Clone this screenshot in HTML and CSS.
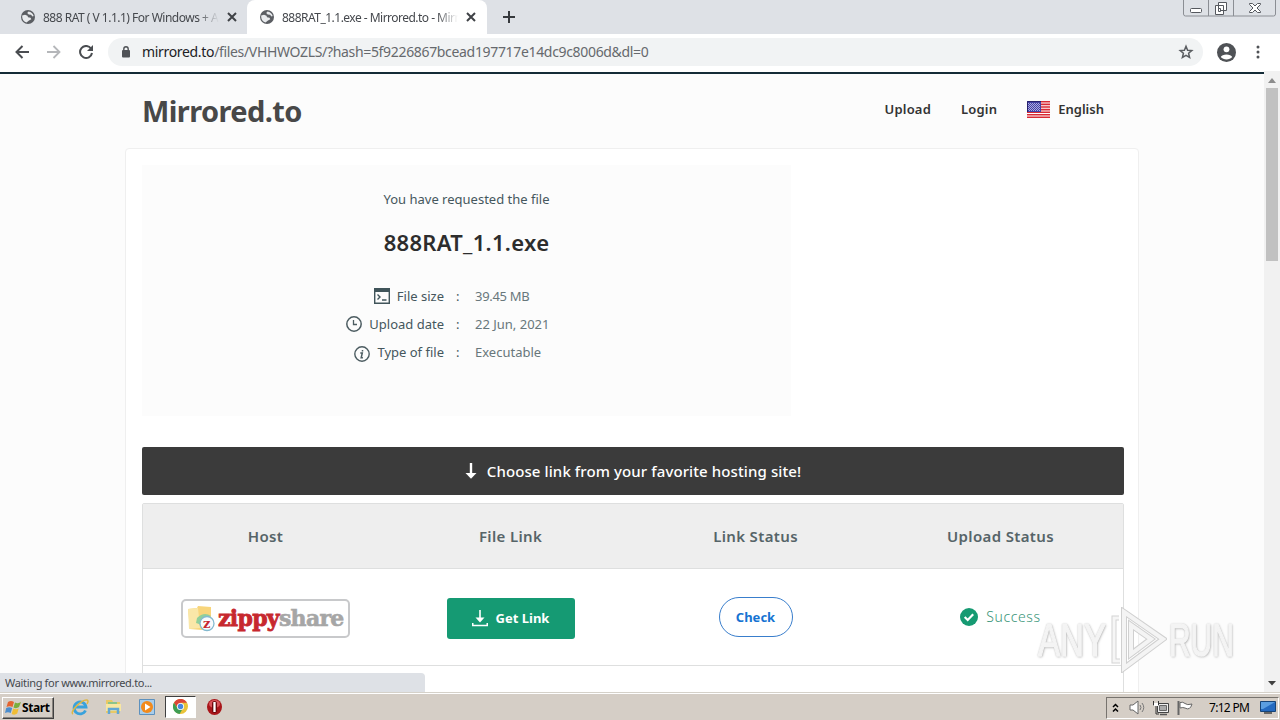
FILE: index.html
```html
<!DOCTYPE html>
<html lang="en">

<head>
	<meta charset="UTF-8">
	<title>888RAT_1.1.exe - Mirrored.to</title>
	<link rel="stylesheet" href="styles.css">
</head>

<body>
	<svg class="defs" width="0" height="0">
		<symbol id="globe" viewBox="0 0 14 14">
			<circle cx="7" cy="7" r="7" fill="#5b5e63"/>
			<path d="M1.200 5.500L4 4.800l2.500 1 .5 1.500 2.500.5.800 1.500L8 10.500l-2.500 2C3 12 1.200 9.500 1.200 7zM7.500 1.500L6.200 3l1.500 1.500 2.300.3 1.500 1.700 1.200-.5C12 3.500 10 1.700 7.500 1.500z" fill="#e8eaed"/>
		</symbol>
		<symbol id="close" viewBox="0 0 10 10">
			<path d="M1 1l8 8M9 1L1 9" stroke="#3f4246" stroke-width="2" fill="none"/>
		</symbol>
	</svg>

	<!-- tabs -->
	<div class="tabs">
		<div class="tab">
			<svg class="tab-icon"><use href="#globe"/></svg>
			<span class="tab-title">888 RAT ( V 1.1.1) For Windows + A</span>
			<svg class="tab-close"><use href="#close"/></svg>
		</div>
		<div class="tab active">
			<svg class="tab-icon"><use href="#globe"/></svg>
			<span class="tab-title second">888RAT_1.1.exe - Mirrored.to - Mirr</span>
			<svg class="tab-close"><use href="#close"/></svg>
		</div>
		<svg class="new-tab" width="12" height="12" viewBox="0 0 12 12"><path d="M6 0v12M0 6h12" stroke="#36393d" stroke-width="2"/></svg>
		<svg class="window-buttons" width="94" height="17" viewBox="0 0 94 17">
			<path d="M.5 0v14q0 2 2 2h88q2 0 2-2V0M25.500 0v16M50.500 0v16" fill="none" stroke="#8b8e94"/>
			<g fill="#fff" stroke="#55585e">
				<rect x="7.500" y="8.500" width="11" height="4" rx="1"/>
				<path d="M35.500 2.500h8v8h-8zM32.500 5.500h8v9h-8z"/>
				<path d="M35.500 8.500h2v3h-2z"/>
				<path d="M66.500 3.500h3l2.500 2.500 2.500-2.500h3v1L74 8l3.500 3.500v1h-3L72 10l-2.500 2.500h-3v-1L70 8l-3.500-3.500z"/>
			</g>
		</svg>
	</div>

	<!-- toolbar -->
	<div class="toolbar">
		<svg width="14" height="14" viewBox="0 0 14 14"><path d="M14 7H1.500M7.500 1L1.500 7l6 6" fill="none" stroke="#4a4d51" stroke-width="2"/></svg>
		<svg width="14" height="14" viewBox="0 0 14 14"><path d="M0 7h12.500M6.500 1l6 6-6 6" fill="none" stroke="#b5b7ba" stroke-width="1.800"/></svg>
		<svg width="14" height="14" viewBox="0 0 14 14"><path d="M12 3.500A6 6 0 1 0 13 8" fill="none" stroke="#4a4d51" stroke-width="2"/><path d="M14 0v6H8z" fill="#4a4d51"/></svg>
		<div class="address">
			<svg width="8" height="12" viewBox="0 0 8 12"><path d="M1.800 5V3a2.200 2.200 0 0 1 4.400 0v2" fill="none" stroke="#4f5256" stroke-width="1.400"/><rect y="4" width="8" height="7.500" rx="1" fill="#4f5256"/></svg>
			<span class="url"><b>mirrored.to</b>/files/VHHWOZLS/?hash=5f9226867bcead197717e14dc9c8006d&amp;dl=0</span>
			<svg width="16" height="16" viewBox="0 0 16 16"><path d="M8 2.200l1.600 4 4.200.3-3.200 2.800 1 4.200L8 11.300l-3.600 2.200 1-4.200-3.200-2.800 4.200-.3z" fill="none" stroke="#5a5d61" stroke-width="1.500"/></svg>
		</div>
		<svg class="profile" width="19" height="19" viewBox="0 0 19 19"><circle cx="9.500" cy="9.500" r="9.500" fill="#4f5256"/><circle cx="9.500" cy="6.300" r="2.900" fill="#fff"/><path d="M3.800 14c1-3.500 10.400-3.500 11.400 0-2.500 3.300-8.900 3.300-11.400 0z" fill="#fff"/></svg>
		<svg class="kebab" width="4" height="14" viewBox="0 0 4 14" fill="#4f5256"><circle cx="2" cy="2" r="1.500"/><circle cx="2" cy="7" r="1.500"/><circle cx="2" cy="12" r="1.500"/></svg>
	</div>

	<!-- page -->
	<div class="viewport">
		<div class="page">
			<header>
				<h1>Mirrored.to</h1>
				<nav>
					<a class="upload">Upload</a>
					<a class="login">Login</a>
					<svg width="23" height="17" viewBox="0 0 23 17">
						<path fill="#fff" d="M0 0h23v17H0z"/>
						<path stroke="#d92a35" stroke-width="1.600" d="M0 .8h23M0 3.400h23M0 6h23M0 8.600h23M0 11.200h23M0 13.800h23M0 16.300h23"/>
						<path fill="#4341a5" d="M0 0h14v11H0z"/>
						<path stroke="#aaa9df" stroke-dasharray="1 1" d="M1 2.500h12M2 3.500h11M1 4.500h12M2 5.500h11M1 6.500h12M2 7.500h11M1 8.500h12M2 9.500h11"/>
						<path stroke="#26206d" fill="none" d="M.5 11V.5H14"/>
					</svg>
					<a class="english">English</a>
				</nav>
			</header>

			<main>
				<section class="file-info">
					<p class="requested">You have requested the file</p>
					<h2>888RAT_1.1.exe</h2>
					<dl>
						<dt>
							<svg width="16" height="16" viewBox="0 0 16 16"><path d="M.7.7h14.600v14.600H.7z" fill="none" stroke="#40545a" stroke-width="1.400"/><path d="M0 0h16v4H0z" fill="#40545a"/><path d="M3.500 6.500L6 9l-2.500 2.500M8 12h4.500" fill="none" stroke="#40545a" stroke-width="1.400"/></svg>
							<span class="t-size">File size</span>
						</dt>
						<dd class="colon">:</dd>
						<dd class="v-size">39.45 MB</dd>
						<dt>
							<svg width="16" height="16" viewBox="0 0 16 16"><circle cx="8" cy="8" r="7.200" fill="none" stroke="#4c5c61" stroke-width="1.500"/><path d="M7.500 4v4.500H11" fill="none" stroke="#4c5c61" stroke-width="1.300"/></svg>
							<span class="t-date">Upload date</span>
						</dt>
						<dd class="colon">:</dd>
						<dd class="v-date">22 Jun, 2021</dd>
						<dt>
							<svg class="info-icon" width="16" height="16" viewBox="0 0 16 16"><circle cx="8" cy="8" r="7.200" fill="none" stroke="#4c5c61" stroke-width="1.400"/><path d="M6.300 7h2L7.200 11.700h1.700M8.500 4v1.500" fill="none" stroke="#4c5c61" stroke-width="1.500"/></svg>
							<span class="t-type">Type of file</span>
						</dt>
						<dd class="colon">:</dd>
						<dd class="v-type">Executable</dd>
					</dl>
				</section>

				<div class="choose">
					<svg width="12" height="16" viewBox="0 0 12 16"><path d="M6 0v11" stroke="#fff" stroke-width="2.400"/><path d="M.5 10h11L6 15.700z" fill="#fff"/></svg>
					<span>Choose link from your favorite hosting site!</span>
				</div>

				<div class="hosts">
					<div class="row head">
						<div><span class="h-host">Host</span></div>
						<div><span class="h-file">File Link</span></div>
						<div><span class="h-link">Link Status</span></div>
						<div><span class="h-up">Upload Status</span></div>
					</div>
					<div class="row">
						<div>
							<div class="zippy">
								<svg width="30" height="30" viewBox="0 0 30 30">
									<path d="M2 5l9-1 1-2 13 1v21l-9 2-12-1z" fill="#f8d57b"/>
									<path d="M2 5l10-1 2 20-11 1z" fill="#fae7a8"/>
									<path d="M11 14q7-7 14-2l-6 3v10l-6-5-3-1z" fill="#91cf9a"/>
									<circle cx="21" cy="19.500" r="7" fill="#f8fbfc" stroke="#83b9cf" stroke-width="1.300"/>
									<text x="17" y="24" class="z">z</text>
								</svg>
								<span class="zippy-red">zippy</span><span class="zippy-gray">share</span>
							</div>
						</div>
						<div>
							<a class="get-link">
								<svg width="16" height="17" viewBox="0 0 16 17"><path d="M8 0v9M0 15.500h16M.7 13v3M15.300 13v3" stroke="#fff" stroke-width="1.600"/><path d="M3.500 7.500h9L8 12.500z" fill="#fff"/></svg>
								<span>Get Link</span>
							</a>
						</div>
						<div><a class="check"><span>Check</span></a></div>
						<div class="success">
							<svg width="18" height="18" viewBox="0 0 18 18"><circle cx="9" cy="9" r="9" fill="#169a72"/><path d="M4.700 9l3 3 5.500-5.700" fill="none" stroke="#fff" stroke-width="2.200"/></svg>
							<span>Success</span>
						</div>
					</div>
				</div>
			</main>
		</div>

		<div class="scrollbar">
			<svg width="8" height="5" viewBox="0 0 8 5"><path d="M0 5l4-5 4 5z" fill="#8c8c8c"/></svg>
			<div class="thumb"></div>
			<svg class="down" width="8" height="5" viewBox="0 0 8 5"><path d="M0 0h8L4 4.500z" fill="#404040"/></svg>
		</div>

		<div class="status"><span>Waiting for www.mirrored.to...</span></div>

		<div class="watermark">
			<span class="any">ANY</span>
			<svg width="58" height="66" viewBox="0 0 58 66" fill="none">
				<path d="M10 11H5v43h6" stroke="#d4d4d4" stroke-width="5"/>
				<path d="M10 11H5v43h6" stroke="#f6f6f6" stroke-width="3"/>
				<path d="M15 5l39 27-39 29V5zM22 18v29l20-15z" stroke="#d0d0d0" stroke-width="6"/>
				<path d="M15 5l39 27-39 29V5zM22 18v29l20-15z" stroke="#f4f4f4" stroke-width="4"/>
			</svg>
			<span class="run">RUN</span>
		</div>
	</div>

	<!-- taskbar -->
	<div class="taskbar">
		<div class="start">
			<svg width="16" height="16" viewBox="0 0 16 16"><path d="M3 2q3-2 6 0L7.500 7Q4.500 5.500 1.500 7z" fill="#e46430"/><path d="M10 2.500q3 1.500 6-.5l-2 5q-2.500 2-5.500.5z" fill="#7aae3c"/><path d="M1.200 8q3-1.500 6 0L5.700 13Q3 11.500 0 13z" fill="#4b8dce"/><path d="M8.200 8.500q3 1.500 5.500 0l-1.500 5q-2.500 2-5.500.5z" fill="#f0bd35"/></svg>
			<span>Start</span>
		</div>
		<svg class="ie" width="18" height="18" viewBox="0 0 18 18" fill="none"><path d="M14.500 12.500A6 6 0 1 1 15 9H4.500" stroke="#39a2dc" stroke-width="2.800"/><path d="M2 16C-2 14 11 1 16 2q2 .5 0 4" stroke="#dfb744" stroke-width="1.500"/></svg>
		<svg class="folder" width="17" height="17" viewBox="0 0 17 17"><path d="M1 2h6l1 2h7v11H1z" fill="#e9c966"/><path d="M3 4h9v3H3z" fill="#8cc48a"/><path d="M1 6h15v7H1z" fill="#f8e7a1"/><path d="M4 16v-5h9v5" stroke="#62a7d4" stroke-width="2.500" fill="none"/></svg>
		<svg class="player" width="16" height="16" viewBox="0 0 16 16"><path d="M.5.500h15v15H.5z" fill="#a9cdea" stroke="#5d91be"/><circle cx="8" cy="8" r="6" fill="#f28a1c"/><path d="M6 4.500v7L11.500 8z" fill="#fff"/></svg>
		<div class="task-active">
			<svg width="15" height="15" viewBox="0 0 16 16"><circle cx="8" cy="8" r="8" fill="#eac33a"/><path d="M1 4a8 8 0 0 1 14 0H8L5 9.500z" fill="#dc4538"/><path d="M1 4a8 8 0 0 0 6 12l3.500-6H5z" fill="#3f9d54"/><circle cx="8" cy="8" r="3.800" fill="#fff"/><circle cx="8" cy="8" r="2.900" fill="#4788df"/></svg>
		</div>
		<svg class="opera" width="15" height="16" viewBox="0 0 15 16"><ellipse cx="7.500" cy="8" rx="7.500" ry="8" fill="#a91519"/><ellipse cx="7.500" cy="5" rx="5.500" ry="4" fill="#d9545a"/><rect x="5" y="2" width="5" height="12" rx="2.500" fill="#6d090d"/><path d="M7.500 3v10" stroke="#fff" stroke-width="2.300"/></svg>

		<div class="tray">
			<svg width="7" height="10" viewBox="0 0 7 10"><path d="M1 4l2.500-2.500L6 4M1 8.500L3.500 6 6 8.500" fill="none" stroke="#000" stroke-width="1.500"/></svg>
			<svg class="sound" width="17" height="15" viewBox="0 0 17 15"><path d="M1 5h3l5-4v13l-5-4H1z" fill="#fff" stroke="#666"/><path d="M11 5q2 2.500 0 5M13 3q3.500 4.500 0 9" fill="none" stroke="#777"/></svg>
			<svg class="network" width="17" height="16" viewBox="0 0 17 16"><path d="M4.500 3.500h11v9h-11z" fill="#eee" stroke="#444"/><path d="M6.500 5.500h7v5h-7z" fill="#aaa" stroke="#666"/><path d="M7 14.500h7" stroke="#555" stroke-width="1.500"/><path d="M.5 1v4h5V1M3 5v9h3" fill="none" stroke="#333"/><path d="M1 3h4v3H1z" fill="#fff"/></svg>
			<svg class="flag" width="17" height="16" viewBox="0 0 17 16"><path d="M1.500 1v14" stroke="#666" stroke-width="2"/><path d="M3 2.500q3-1 5 1t7 .5q-2 7-7 4-2-1-5 0z" fill="#fff" stroke="#666"/></svg>
			<span class="clock">7:12 PM</span>
			<svg class="desktop" width="16" height="13" viewBox="0 0 16 13"><path d="M.5.500h15v10H.5z" fill="#246ac0" stroke="#164477"/><path d="M1 1h14L3 8H1z" fill="#5b9ee0"/><path d="M4 12h8" stroke="#444" stroke-width="1.500"/></svg>
		</div>
	</div>
</body>

</html>
```
FILE: styles.css
```css
* {
	box-sizing: border-box;
}

body {
	margin: 0;
	width: 1280px;
	height: 720px;
	overflow: hidden;
	display: flex;
	flex-direction: column;
	font-family: "Noto Sans", "Open Sans", sans-serif;
	background: #fff;
}

svg {
	flex: none;
	display: block;
}

.defs {
	position: absolute;
}

h1, h2, p, dl, dd {
	margin: 0;
}

span, a {
	white-space: nowrap;
}

/* tabs */
.tabs {
	height: 34px;
	flex: none;
	display: flex;
	background: #dee1e6;
	font-size: 12px;
	color: #45484d;
}

.tab {
	width: 247px;
	height: 34px;
	padding-left: 21px;
	display: flex;
	align-items: center;
}

.tab.active {
	width: 240px;
	padding-left: 13px;
	background: #fff;
	border-radius: 8px 8px 0 0;
}

.tab-icon {
	width: 14px;
	height: 14px;
}

.tab-title {
	width: 176px;
	margin-left: 8px;
	letter-spacing: -0.5px;
	-webkit-mask-image: linear-gradient(to right, #000 88%, transparent);
	mask-image: linear-gradient(to right, #000 88%, transparent);
}

.tab-title.second {
	letter-spacing: -0.52px;
}

.tab-close {
	width: 10px;
	height: 10px;
	margin-left: 8px;
}

.new-tab {
	margin: 11px 0 0 16px;
}

.window-buttons {
	margin-left: auto;
	margin-right: 3px;
}

/* toolbar */
.toolbar {
	height: 37px;
	flex: none;
	display: flex;
	align-items: center;
	padding: 0 0 1px 15px;
	background: #fff;
}

.toolbar > svg {
	margin-right: 18px;
}

.toolbar > .profile {
	margin: 0 0 0 14px;
}

.toolbar > .kebab {
	margin: 0 0 0 20px;
}

.address {
	width: 1095px;
	height: 28px;
	margin-left: -3px;
	padding: 0 9px 0 14px;
	display: flex;
	align-items: center;
	background: #f1f3f4;
	border-radius: 14px;
}

.url {
	margin-left: 12px;
	margin-right: auto;
	margin-top: -2px;
	font-size: 14px;
	letter-spacing: -0.33px;
	color: #66696d;
}

.url b {
	font-weight: normal;
	color: #202124;
}

/* page */
.viewport {
	position: relative;
	height: 621px;
	flex: none;
	display: flex;
	overflow: hidden;
}

.page {
	width: 1264px;
	margin-top: 1px;
	border-top: 2px solid #142b37;
	background: #fcfcfc;
}

header {
	height: 74px;
	padding: 0 160px 0 142px;
	display: flex;
	justify-content: space-between;
	align-items: center;
}

h1 {
	font-size: 29px;
	line-height: 40px;
	letter-spacing: -0.6px;
	color: #484848;
}

nav {
	margin-top: -4px;
	display: flex;
	align-items: center;
	font-size: 13px;
	font-weight: 600;
	color: #333;
}

nav svg {
	margin: 0 8px 0 30px;
}

.upload {
	letter-spacing: 0.2px;
}

.login {
	margin-left: 30px;
	letter-spacing: 0.2px;
}

main {
	width: 1014px;
	height: 560px;
	margin-left: 125px;
	padding: 16px;
	background: #fff;
	border: 1px solid #efefef;
	border-radius: 4px;
}

.file-info {
	width: 649px;
	height: 251px;
	padding-top: 24px;
	display: flex;
	flex-direction: column;
	align-items: center;
	background: #fcfcfc;
	color: #45575d;
}

.requested {
	font-size: 13px;
	line-height: 20px;
}

h2 {
	margin-top: 17px;
	font-size: 22px;
	line-height: 32px;
	font-weight: 600;
	letter-spacing: 0.3px;
	color: #2d2d2d;
}

dl {
	width: 649px;
	margin-top: 24px;
	display: grid;
	grid-template-columns: 302px 31px 1fr;
	grid-auto-rows: 28px;
	align-items: center;
	font-size: 13px;
	line-height: 20px;
}

dt {
	display: flex;
	align-items: center;
	justify-content: flex-end;
	gap: 7px;
}

.info-icon {
	margin-top: 3px;
}

.colon {
	padding-left: 12px;
	color: #45575d;
}

dd {
	color: #68777b;
}

.v-size {
	letter-spacing: -0.3px;
}

.choose {
	width: 982px;
	height: 48px;
	margin-top: 31px;
	display: flex;
	align-items: center;
	justify-content: center;
	gap: 10px;
	background: #3b3b3b;
	border-radius: 2px;
	color: #fff;
	font-size: 15px;
	font-weight: 500;
	letter-spacing: 0.1px;
}

/* hosts table */
.hosts {
	width: 982px;
	height: 230px;
	margin-top: 8px;
	border: 1px solid #dedfdf;
	border-radius: 2px 2px 0 0;
}

.row {
	height: 97px;
	display: grid;
	grid-template-columns: repeat(4, 245px);
	align-items: center;
	justify-items: center;
	border-bottom: 1px solid #dedfdf;
}

.row.head {
	height: 65px;
	background: #eee;
	color: #566468;
	font-size: 15px;
	font-weight: 600;
	letter-spacing: 0.35px;
}

.zippy {
	width: 169px;
	height: 39px;
	margin-top: 3px;
	padding-left: 3px;
	display: flex;
	align-items: center;
	border: 2px solid #c8c9cb;
	border-radius: 5px;
	font-family: "DejaVu Serif", "Liberation Serif", serif;
	font-size: 22px;
	font-weight: bold;
	letter-spacing: -0.7px;
	line-height: 30px;
}

.zippy-red {
	margin-left: 2px;
	margin-top: -2px;
	color: #c7282e;
	-webkit-text-stroke: 0.8px #c7282e;
}

.zippy-gray {
	margin-top: -2px;
	color: #a6a6a6;
	-webkit-text-stroke: 0.6px #a6a6a6;
}

.z {
	font-size: 13px;
	fill: #c7282e;
}

.get-link {
	width: 128px;
	height: 41px;
	margin-top: 2px;
	display: flex;
	align-items: center;
	justify-content: center;
	gap: 8px;
	background: #159a73;
	border-radius: 3px;
	color: #fff;
	font-size: 13px;
	font-weight: bold;
}

.check {
	width: 74px;
	height: 40px;
	display: flex;
	align-items: center;
	justify-content: center;
	border: 1px solid #397ecc;
	border-radius: 20px;
	color: #1673d2;
	font-size: 13px;
	font-weight: bold;
}

.success {
	display: flex;
	align-items: center;
	gap: 8px;
	margin-top: -1px;
	color: #379477;
	font-size: 14px;
	font-weight: 300;
	letter-spacing: 0.6px;
}

/* scrollbar */
.scrollbar {
	width: 16px;
	padding-top: 7px;
	display: flex;
	flex-direction: column;
	align-items: center;
	background: #f1f1f1;
}

.thumb {
	width: 12px;
	height: 173px;
	margin-top: 5px;
	background: #c1c1c1;
}

.down {
	margin-top: auto;
	margin-bottom: 6px;
}

.status {
	position: absolute;
	left: 0;
	bottom: 0;
	width: 425px;
	height: 19px;
	padding-left: 5px;
	background: #dee1e6;
	border-radius: 0 4px 0 0;
	color: #45484d;
	font-size: 11px;
	line-height: 19px;
	letter-spacing: -0.33px;
}

.watermark {
	position: absolute;
	left: 1038px;
	top: 536px;
	display: flex;
	align-items: center;
	font-family: "Liberation Sans", Arial, sans-serif;
	font-size: 46px;
	line-height: 66px;
	color: #f4f4f4;
	-webkit-text-stroke: 1.5px #f4f4f4;
	text-shadow: 0 0 2px #999, 1px 1px 3px #aaa;
}

.watermark svg {
	margin-left: 1px;
}

.any, .run {
	width: 70px;
	transform: scaleX(0.72);
	transform-origin: left center;
}

.run {
	margin-left: 2px;
	transform: scaleX(0.65);
}

/* taskbar */
.taskbar {
	height: 28px;
	flex: none;
	display: flex;
	align-items: center;
	border-top: 1px solid #d5d1c9;
	box-shadow: inset 0 1px #fff;
	background: #d5cec6;
}

.start {
	width: 52px;
	height: 22px;
	margin: 2px 0 0 2px;
	padding-left: 2px;
	display: flex;
	align-items: center;
	border: 1px solid;
	border-color: #fff #404040 #404040 #fff;
	box-shadow: inset -1px -1px #89847e;
	font-size: 12px;
	font-weight: bold;
	letter-spacing: -0.4px;
}

.start svg {
	margin-right: 1px;
}

.ie {
	margin-left: 17px;
}

.folder {
	margin-left: 16px;
}

.player {
	margin-left: 17px;
}

.task-active {
	width: 31px;
	height: 22px;
	margin-left: 10px;
	display: flex;
	align-items: center;
	justify-content: center;
	background: #fff;
	border: 1px solid;
	border-color: #404040 #fff #fff #404040;
}

.opera {
	margin-left: 11px;
}

.tray {
	width: 173px;
	height: 22px;
	margin: 2px 1px 0 auto;
	padding-left: 5px;
	display: flex;
	align-items: center;
	border: 1px solid;
	border-color: #77736e #fff #fff #77736e;
	font-size: 12px;
}

.sound {
	margin-left: 10px;
}

.network {
	margin-left: 7px;
}

.flag {
	margin-left: 7px;
}

.clock {
	width: 41px;
	margin-left: 15px;
	letter-spacing: -0.7px;
}

.desktop {
	margin-left: 10px;
}
```
